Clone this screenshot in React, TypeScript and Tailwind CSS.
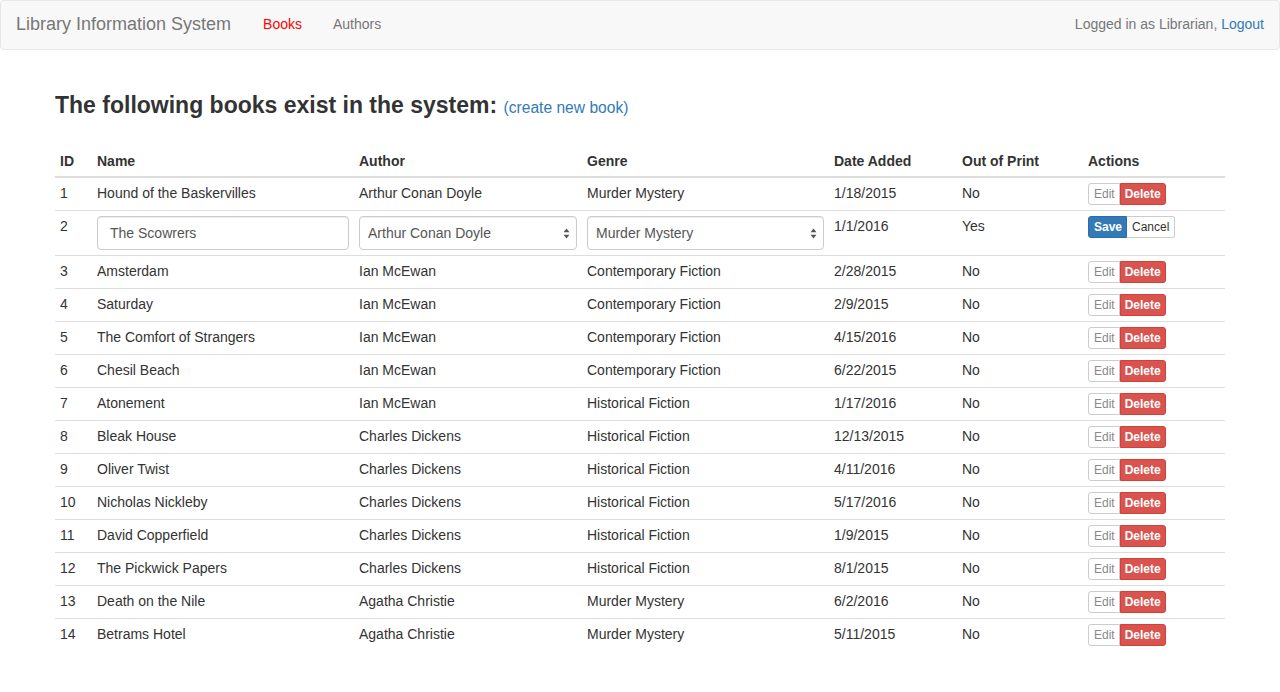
import React from "react";

const rows = [
  { id: 1, name: "Hound of the Baskervilles", author: "Arthur Conan Doyle", genre: "Murder Mystery", date: "1/18/2015", oop: "No" },
  { id: 2, name: "The Scowrers", author: "Arthur Conan Doyle", genre: "Murder Mystery", date: "1/1/2016", oop: "Yes", edit: true },
  { id: 3, name: "Amsterdam", author: "Ian McEwan", genre: "Contemporary Fiction", date: "2/28/2015", oop: "No" },
  { id: 4, name: "Saturday", author: "Ian McEwan", genre: "Contemporary Fiction", date: "2/9/2015", oop: "No" },
  { id: 5, name: "The Comfort of Strangers", author: "Ian McEwan", genre: "Contemporary Fiction", date: "4/15/2016", oop: "No" },
  { id: 6, name: "Chesil Beach", author: "Ian McEwan", genre: "Contemporary Fiction", date: "6/22/2015", oop: "No" },
  { id: 7, name: "Atonement", author: "Ian McEwan", genre: "Historical Fiction", date: "1/17/2016", oop: "No" },
  { id: 8, name: "Bleak House", author: "Charles Dickens", genre: "Historical Fiction", date: "12/13/2015", oop: "No" },
  { id: 9, name: "Oliver Twist", author: "Charles Dickens", genre: "Historical Fiction", date: "4/11/2016", oop: "No" },
  { id: 10, name: "Nicholas Nickleby", author: "Charles Dickens", genre: "Historical Fiction", date: "5/17/2016", oop: "No" },
  { id: 11, name: "David Copperfield", author: "Charles Dickens", genre: "Historical Fiction", date: "1/9/2015", oop: "No" },
  { id: 12, name: "The Pickwick Papers", author: "Charles Dickens", genre: "Historical Fiction", date: "8/1/2015", oop: "No" },
  { id: 13, name: "Death on the Nile", author: "Agatha Christie", genre: "Murder Mystery", date: "6/2/2016", oop: "No" },
  { id: 14, name: "Betrams Hotel", author: "Agatha Christie", genre: "Murder Mystery", date: "5/11/2015", oop: "No" },
];

function Arrows() {
  return (
    <svg width="7" height="11" viewBox="0 0 7 11" className="shrink-0">
      <path d="M3.5 0.5 L6.5 4.2 L0.5 4.2 Z" fill="#555" />
      <path d="M3.5 10.5 L6.5 6.8 L0.5 6.8 Z" fill="#555" />
    </svg>
  );
}

function FakeSelect({ value, width }: { value: string; width: string }) {
  return (
    <div className={`${width} h-[34px] border border-[#ccc] rounded-[4px] bg-white flex items-center justify-between pl-[8px] pr-[6px] text-[14px] text-[#555] shadow-[inset_0_1px_1px_rgba(0,0,0,0.075)]`}>
      <span>{value}</span>
      <Arrows />
    </div>
  );
}

export default function App() {
  const td = "px-[5px] py-[5px] leading-[20px] border-t border-[#ddd] align-top";
  const th = "px-[5px] py-[5px] leading-[20px] border-b-2 border-[#ddd] font-bold";
  return (
    <div className="min-h-[692px] bg-white text-[14px] text-[#333]" style={{ fontFamily: '"Liberation Sans", Arial, sans-serif' }}>
      <nav className="h-[50px] pb-[2px] bg-[#f8f8f8] border border-[#e7e7e7] rounded-[4px] flex items-center justify-between">
        <div className="flex items-center h-full">
          <span className="pl-[15px] pr-[17px] text-[18px] text-[#777] leading-[20px]">Library Information System</span>
          <span className="px-[15px] text-[#f00] leading-[20px]">Books</span>
          <span className="pl-[16px] pr-[15px] text-[#777] leading-[20px]">Authors</span>
        </div>
        <div className="mr-[15px] text-[#777] leading-[20px]">
          Logged in as Librarian, <span className="text-[#337ab7]">Logout</span>
        </div>
      </nav>
      <div className="w-[1170px] mx-auto">
        <h3 className="mt-[42px] mb-[25px] text-[23px] leading-[26px] font-bold text-[#333]">
          The following books exist in the system:{" "}
          <span className="text-[15.6px] font-normal text-[#337ab7]">(create new book)</span>
        </h3>
        <table className="w-full border-collapse text-left">
          <thead>
            <tr>
              <th className={`w-[37px] ${th}`}>ID</th>
              <th className={`w-[262px] ${th}`}>Name</th>
              <th className={`w-[228px] ${th}`}>Author</th>
              <th className={`w-[247px] ${th}`}>Genre</th>
              <th className={`w-[128px] ${th}`}>Date Added</th>
              <th className={`w-[126px] ${th}`}>Out of Print</th>
              <th className={th}>Actions</th>
            </tr>
          </thead>
          <tbody>
            {rows.map((r, i) => {
              const c = i === 0 ? "px-[5px] py-[5px] leading-[20px] align-top" : td;
              if (r.edit) {
                return (
                  <tr key={r.id}>
                    <td className={c}>{r.id}</td>
                    <td className={c}>
                      <div className="w-[252px] h-[34px] border border-[#ccc] rounded-[4px] px-[12px] flex items-center text-[#555] shadow-[inset_0_1px_1px_rgba(0,0,0,0.075)]">{r.name}</div>
                    </td>
                    <td className={c}>
                      <FakeSelect value={r.author} width="w-[218px]" />
                    </td>
                    <td className={c}>
                      <FakeSelect value={r.genre} width="w-[237px]" />
                    </td>
                    <td className={c}>{r.date}</td>
                    <td className={c}>{r.oop}</td>
                    <td className={c}>
                      <div className="flex">
                        <span className="h-[22px] pl-[5px] pr-[4px] text-[12px] leading-[20px] text-white font-bold bg-[#337ab7] border border-[#2e6da4] rounded-l-[3px]">Save</span>
                        <span className="h-[22px] px-[5px] text-[12px] leading-[20px] text-[#333] bg-white border border-l-0 border-[#ccc] rounded-r-[3px]">Cancel</span>
                      </div>
                    </td>
                  </tr>
                );
              }
              return (
                <tr key={r.id}>
                  <td className={c}>{r.id}</td>
                  <td className={c}>{r.name}</td>
                  <td className={c}>{r.author}</td>
                  <td className={c}>{r.genre}</td>
                  <td className={c}>{r.date}</td>
                  <td className={c}>{r.oop}</td>
                  <td className={c}>
                    <div className="flex">
                      <span className="h-[22px] pl-[5px] pr-[4px] text-[12px] leading-[20px] text-[#888] bg-white border border-[#ccc] rounded-l-[3px]">Edit</span>
                      <span className="h-[22px] px-[4px] text-[12px] leading-[20px] text-white font-bold bg-[#d9534f] border border-[#d43f3a] rounded-r-[3px]">Delete</span>
                    </div>
                  </td>
                </tr>
              );
            })}
          </tbody>
        </table>
      </div>
    </div>
  );
}
